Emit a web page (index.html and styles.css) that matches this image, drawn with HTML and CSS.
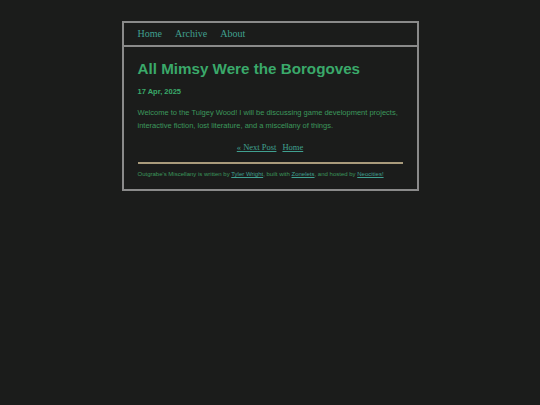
FILE: index.html
```
<!DOCTYPE html>
<html>
<head>
<meta charset="utf-8">
<link rel="stylesheet" href="styles.css">
</head>
<body>
<div class="wrap">
  <nav class="nav">
    <a href="#">Home</a>
    <a href="#">Archive</a>
    <a href="#">About</a>
  </nav>
  <main class="main">
    <h1 class="title">All Mimsy Were the Borogoves</h1>
    <p class="date">17 Apr, 2025</p>
    <p class="body">Welcome to the Tulgey Wood! I will be discussing game development projects, interactive fiction, lost literature, and a miscellany of things.</p>
    <div class="pager"><a href="#">« Next Post</a><a href="#">Home</a></div>
    <footer class="foot">Outgrabe's Miscellany is written by <a href="#">Tyler Wright</a>, built with <a href="#">Zonelets</a>, and hosted by <a href="#">Neocities!</a></footer>
  </main>
</div>
</body>
</html>
```
FILE: styles.css
```
html, body { margin: 0; padding: 0; }
body {
  background: #1b1c1b;
  font-family: "Liberation Sans", Arial, sans-serif;
  color: #3b985c;
}
.wrap {
  width: 293px;
  margin: 21px auto 0;
  border: 2px solid #8a8a8a;
  border-bottom: none;
}
.nav {
  height: 21px;
  padding: 0 16px 1px 14px;
  display: flex;
  align-items: center;
  gap: 13px;
  border-bottom: 2px solid #8a8a8a;
  font-family: "Liberation Serif", Georgia, serif;
  font-size: 10px;
}
.nav a { color: #40a090; text-decoration: none; }
.main {
  padding: 13px 14px 10px;
  border-bottom: 2px solid #8a8a8a;
}
.title {
  margin: 0;
  font-size: 15.2px;
  line-height: 18px;
  font-weight: bold;
  color: #3aa96a;
}
.date {
  margin: 8px 0 0;
  font-size: 7.5px;
  line-height: 12px;
  font-weight: bold;
  color: #3aa96a;
}
.body {
  margin: 8px 0 0;
  font-size: 7.5px;
  line-height: 13px;
  color: #3b985c;
}
.pager {
  margin-top: 9px;
  display: flex;
  justify-content: center;
  gap: 6px;
  font-family: "Liberation Serif", Georgia, serif;
  font-size: 8.5px;
  line-height: 12px;
}
.pager a { color: #40a090; }
.foot {
  margin-top: 9px;
  border-top: 2px solid #a99b7c;
  padding-top: 5px;
  font-size: 6px;
  line-height: 10px;
  color: #3b985c;
}
.foot a { color: #40a090; }
```
